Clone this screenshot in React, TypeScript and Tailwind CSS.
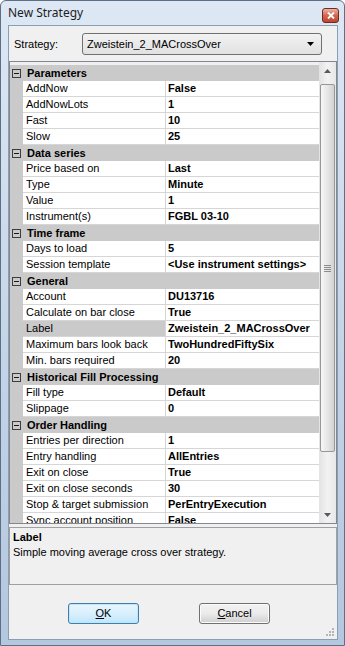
import React from "react"

type Section = { name: string; rows: [string, string][] }

const sections: Section[] = [
  {
    name: "Parameters",
    rows: [
      ["AddNow", "False"],
      ["AddNowLots", "1"],
      ["Fast", "10"],
      ["Slow", "25"],
    ],
  },
  {
    name: "Data series",
    rows: [
      ["Price based on", "Last"],
      ["Type", "Minute"],
      ["Value", "1"],
      ["Instrument(s)", "FGBL 03-10"],
    ],
  },
  {
    name: "Time frame",
    rows: [
      ["Days to load", "5"],
      ["Session template", "<Use instrument settings>"],
    ],
  },
  {
    name: "General",
    rows: [
      ["Account", "DU13716"],
      ["Calculate on bar close", "True"],
      ["Label", "Zweistein_2_MACrossOver"],
      ["Maximum bars look back", "TwoHundredFiftySix"],
      ["Min. bars required", "20"],
    ],
  },
  {
    name: "Historical Fill Processing",
    rows: [
      ["Fill type", "Default"],
      ["Slippage", "0"],
    ],
  },
  {
    name: "Order Handling",
    rows: [
      ["Entries per direction", "1"],
      ["Entry handling", "AllEntries"],
      ["Exit on close", "True"],
      ["Exit on close seconds", "30"],
      ["Stop & target submission", "PerEntryExecution"],
      ["Sync account position", "False"],
    ],
  },
]

const font = "font-['Liberation_Sans',Arial,sans-serif]"

function CategoryRow({ name }: { name: string }) {
  return (
    <div className="flex h-[16px] items-center bg-[#cacaca]">
      <div className="flex w-[13px] justify-center">
        <div className="flex h-[9px] w-[9px] items-center justify-center border border-[#3c3c3c]">
          <div className="h-[1px] w-[5px] bg-[#1a1a1a]" />
        </div>
      </div>
      <span className="pl-[4px] text-[11px] font-bold text-black">{name}</span>
    </div>
  )
}

function PropRow({ label, value, selected }: { label: string; value: string; selected?: boolean }) {
  return (
    <div className="flex h-[16px]">
      <div className="w-[13px] bg-[#cacaca]" />
      <div
        className={`flex w-[143px] items-center overflow-hidden whitespace-nowrap border-b border-r border-[#d6d6d6] pl-[3px] text-[11px] text-black ${
          selected ? "bg-[#cacaca]" : "bg-white"
        }`}
      >
        {label}
      </div>
      <div className="flex flex-1 items-center overflow-hidden whitespace-nowrap border-b border-[#d6d6d6] bg-white pl-[2px] text-[11px] font-bold text-black">
        {value}
      </div>
    </div>
  )
}

function Scrollbar() {
  return (
    <div className="flex w-[17px] flex-col bg-gradient-to-r from-[#e3e3e3] via-[#f2f2f2] to-[#e8e8e8]">
      <div className="flex h-[17px] items-center justify-center">
        <svg width="7" height="4" viewBox="0 0 7 4">
          <path d="M0 4 L3.5 0 L7 4 Z" fill="#5a5a5a" />
        </svg>
      </div>
      <div className="mx-[1px] mt-[5px] flex h-[368px] items-center justify-center rounded-[2px] border border-[#979797] bg-gradient-to-r from-[#f6f6f6] via-[#e6e6e6] to-[#d2d2d2]">
        <div className="flex flex-col gap-[1px]">
          <div className="h-[1px] w-[7px] bg-[#8c8c8c]" />
          <div className="h-[1px] w-[7px] bg-[#8c8c8c]" />
          <div className="h-[1px] w-[7px] bg-[#8c8c8c]" />
          <div className="h-[1px] w-[7px] bg-[#8c8c8c]" />
        </div>
      </div>
      <div className="flex-1" />
      <div className="flex h-[17px] items-center justify-center">
        <svg width="7" height="4" viewBox="0 0 7 4">
          <path d="M0 0 L7 0 L3.5 4 Z" fill="#5a5a5a" />
        </svg>
      </div>
    </div>
  )
}

function DialogButton({ children, primary }: { children: React.ReactNode; primary?: boolean }) {
  return (
    <button
      className={`h-[21px] w-[71px] rounded-[3px] border text-[11px] text-black ${
        primary
          ? "border-[#3c7fb1] bg-gradient-to-b from-[#eaf6fd] via-[#d9f0fc] to-[#bee6fd] shadow-[inset_0_0_0_1px_#c4e5f6]"
          : "border-[#707070] bg-gradient-to-b from-[#f2f2f2] via-[#ebebeb] to-[#cfcfcf] shadow-[inset_0_0_0_1px_#fcfcfc]"
      }`}
    >
      {children}
    </button>
  )
}

export default function App() {
  return (
    <div className={`flex h-[646px] w-[345px] flex-col rounded-t-[6px] border border-[#5d6f86] bg-gradient-to-b from-[#dde8f4] via-[#c6d6e9] to-[#b3c7df] ${font}`}>
      {/* Title bar */}
      <div className="flex h-[24px] items-start justify-between pl-[7px] pr-[5px]">
        <span className="mt-[4px] font-['Noto_Sans',sans-serif] text-[12px] leading-[16px] text-[#1e1e1e]">
          New Strategy
        </span>
        <div className="mt-[7px] flex h-[15px] w-[17px] items-center justify-center rounded-[3px] border border-[#6e2b22] bg-gradient-to-b from-[#eab4a8] via-[#d2654f] to-[#c0452c]">
          <svg width="8" height="7" viewBox="0 0 8 7">
            <path d="M1 0.5 L7 6.5 M7 0.5 L1 6.5" stroke="#ffffff" strokeWidth="1.8" />
          </svg>
        </div>
      </div>

      <div className="flex flex-1 px-[7px] pb-[5px]">
        {/* Client area */}
        <div className="flex flex-1 flex-col border border-[#8a9db5] bg-[#f0f0f0]">
          {/* Strategy selector */}
          <div className="flex h-[22px] items-center pl-[5px] pt-0 mt-[7px]">
            <span className="w-[68px] text-[11px] text-black">Strategy:</span>
            <div className="flex h-[22px] w-[240px] items-center justify-between rounded-[3px] border border-[#707070] bg-gradient-to-b from-[#f2f2f2] to-[#e1e1e1] pl-[4px] pr-[7px]">
              <span className="text-[11px] text-black">Zweistein_2_MACrossOver</span>
              <svg width="7" height="4" viewBox="0 0 7 4">
                <path d="M0 0 L7 0 L3.5 4 Z" fill="#000000" />
              </svg>
            </div>
          </div>

          {/* Property grid */}
          <div className="ml-[0px] mt-[6px] flex h-[463px] w-[328px] border border-[#828790] bg-[#f0f0f0]">
            <div className="flex-1 overflow-hidden pt-[3px]">
              {sections.map((s) => (
                <div key={s.name}>
                  <CategoryRow name={s.name} />
                  {s.rows.map(([l, v]) => (
                    <PropRow key={l} label={l} value={v} selected={l === "Label"} />
                  ))}
                </div>
              ))}
            </div>
            <Scrollbar />
          </div>

          {/* Description */}
          <div className="mt-[3px] h-[58px] w-[328px] border border-[#a0a0a0] bg-[#f0f0f0] pl-[3px] pt-[2px] text-[11px] leading-[15px] text-black">
            <div className="font-bold">Label</div>
            <div>Simple moving average cross over strategy.</div>
          </div>

          {/* Buttons */}
          <div className="mt-[18px] flex gap-[60px] pl-[59px]">
            <DialogButton primary>
              <span className="underline">O</span>K
            </DialogButton>
            <DialogButton>
              <span className="underline">C</span>ancel
            </DialogButton>
          </div>

          <div className="flex flex-1 items-end justify-end pb-[3px] pr-[3px]">
            <svg width="9" height="9" viewBox="0 0 9 9">
              <rect x="7" y="1" width="2" height="2" fill="#b5b5b5" />
              <rect x="4" y="4" width="2" height="2" fill="#b5b5b5" />
              <rect x="7" y="4" width="2" height="2" fill="#b5b5b5" />
              <rect x="1" y="7" width="2" height="2" fill="#b5b5b5" />
              <rect x="4" y="7" width="2" height="2" fill="#b5b5b5" />
              <rect x="7" y="7" width="2" height="2" fill="#b5b5b5" />
            </svg>
          </div>
        </div>
      </div>
    </div>
  )
}
